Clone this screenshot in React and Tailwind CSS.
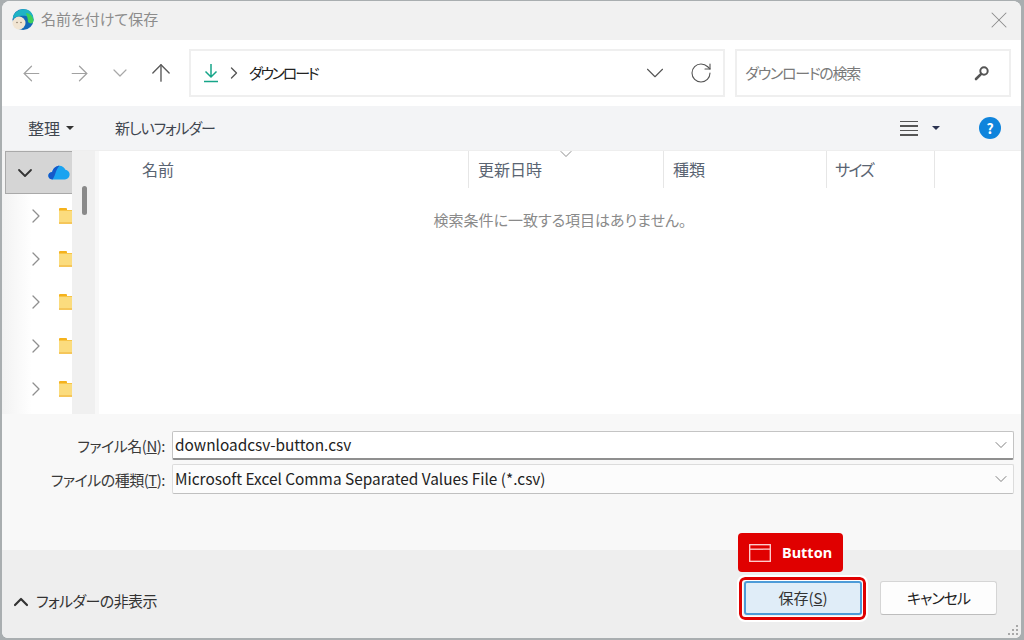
import React from "react";
import { ArrowLeft, ArrowRight, ArrowUp, ChevronDown, ChevronRight, ChevronUp, RotateCw, X } from "lucide-react";

const font = "font-['Noto_Sans_CJK_JP','Liberation_Sans',sans-serif] [font-feature-settings:'palt']";

const EdgeLogo = () => (
  <svg width="24" height="24" viewBox="0 0 24 24" className="mr-[6px]">
    <circle cx="12" cy="11.500" r="10.500" fill="#1268b8" />
    <path d="M2 9 C4 2 12 0 17 2 C21 4 23 8 22.500 13 C20 9 14 7 9 8 C6 8.500 3.500 9 2 11 Z" fill="#1fb3c4" />
    <path d="M15 5 C19 5 22.500 9 22.500 13 C22 16 19 16 17 14 C17 11 16 8 15 5 Z" fill="#3fd05a" />
    <circle cx="8" cy="15" r="6.500" fill="#f1e5d3" />
    <circle cx="6" cy="14.500" r="0.800" fill="#8a7a68" />
    <circle cx="10" cy="14.500" r="0.800" fill="#8a7a68" />
  </svg>
);

const DownloadIcon = () => (
  <svg width="16" height="20" viewBox="0 0 16 20" fill="none" stroke="#16a589" strokeWidth="1.500">
    <path d="M8 1 V14 M2.500 8.500 L8 14 L13.500 8.500 M1 18.500 H15" />
  </svg>
);

const SearchIcon = () => (
  <svg width="16" height="16" viewBox="0 0 16 16" fill="none" stroke="#555" strokeWidth="2">
    <circle cx="10" cy="6" r="3.700" />
    <path d="M7.200 8.800 L2 14" strokeWidth="2.600" strokeLinecap="round" />
  </svg>
);

const Caret = ({ className = "" }) => (
  <span className={`w-0 h-0 border-x-[4px] border-x-transparent border-t-[4px] ${className}`} />
);

const CloudIcon = () => (
  <svg width="22" height="15" viewBox="0 0 24 16">
    <path d="M5 15.500 C1.500 15.500 0 13 0.500 10.500 C1 8.500 3 7.500 4.500 7.500 C5.500 3 9 0.500 12.500 0.500 C15.500 0.500 18 2.500 19 5 C22 5.500 24 8 23.500 11 C23 14 21 15.500 18.500 15.500 Z" fill="#1aa3f0" />
    <path d="M5 15.500 C1.500 15.500 0 13 0.500 10.500 C1 8.500 3 7.500 4.500 7.500 C5.500 3 9 0.500 12.500 0.500 C10 3 9 6 8 9 C7 12 6 14 5 15.500 Z" fill="#1558c9" />
  </svg>
);

const FolderIcon = () => (
  <div className="relative w-[13px] h-[16px] shrink-0 overflow-hidden">
    <div className="absolute left-0 top-0 w-[8px] h-[5px] rounded-t-[1px] bg-[#f5b21c]" />
    <div className="absolute left-0 top-[2px] w-[16px] h-[14px] bg-[#fbdc7e] border-t border-[#f7c548] border-b-[2px] border-b-[#f5c65a]" />
  </div>
);

const TreeRow = () => (
  <div className="h-[43.400px] flex items-center pl-[22px] gap-[11px]">
    <ChevronRight size={24} strokeWidth={1.300} className="text-[#8f8f8f] shrink-0" />
    <FolderIcon />
  </div>
);

const columns = [
  { label: "更新日時", width: "w-[195px]", text: "pl-[9px]" },
  { label: "種類", width: "w-[163px]", text: "pl-[9px]" },
  { label: "サイズ", width: "w-[108px]", text: "pl-[8px] tracking-[-1.800px]" },
];

const Field = ({ label, letter, rest, value, active }) => (
  <div className="flex items-center">
    <div className="w-[163px] text-right text-[15px] leading-none tracking-[-0.500px] text-[#3a3a3a] whitespace-nowrap">
      {label}(<span className="underline">{letter}</span>){rest}
    </div>
    <div
      className={`ml-[7px] w-[842px] flex items-center justify-between pl-[2px] pr-[2px] border rounded-[2px] ${
        active
          ? "h-[29px] bg-white border-[#c4c4c4] border-b-[#8f8f8f] border-b-2"
          : "h-[30px] bg-[#fcfcfc] border-[#dcdcdc] border-b-[#c0c0c0]"
      }`}
    >
      <span className="text-[15.400px] text-[#222] whitespace-nowrap">{value}</span>
      <ChevronDown size={20} strokeWidth={1} className="text-[#666]" />
    </div>
  </div>
);

export default function App() {
  return (
    <div className={`${font} w-[1024px] h-[640px] overflow-hidden relative pl-[2px] pr-[3px] pt-[1px] pb-[2px] bg-[#a9aeb0]`}>
      <div className="h-full flex flex-col rounded-t-[8px] rounded-b-[6px] overflow-hidden bg-white">
        {/* title bar */}
        <div className="h-[39px] shrink-0 bg-[#f1f1f1] flex items-center pl-[9px] pr-[8px] pb-[2px]">
          <EdgeLogo />
          <span className="text-[15px] text-[#8c8c8c]">名前を付けて保存</span>
          <X size={28} strokeWidth={0.900} className="ml-auto text-[#8c8c8c]" />
        </div>

        {/* nav bar */}
        <div className="h-[66px] shrink-0 bg-white flex items-center pl-[17px] pr-[10px]">
          <ArrowLeft size={25} strokeWidth={1.200} className="text-[#a2a2a2]" />
          <ArrowRight size={25} strokeWidth={1.200} className="text-[#a2a2a2] ml-[23px]" />
          <ChevronDown size={24} strokeWidth={1.200} className="text-[#a8a8a8] ml-[16px]" />
          <ArrowUp size={28} strokeWidth={1.200} className="text-[#5c5c5c] ml-[15px]" />
          <div className="ml-[14px] w-[537px] h-[48px] border-2 border-[#efefef] flex items-center pl-[12px] pr-[10px]">
            <DownloadIcon />
            <ChevronRight size={20} strokeWidth={1.600} className="text-[#555] ml-[5px]" />
            <span className="ml-[5px] text-[15px] tracking-[-2.200px] text-[#222]">ダウンロード</span>
            <ChevronDown size={30} strokeWidth={0.900} className="ml-auto text-[#555]" />
            <RotateCw size={24} strokeWidth={1.100} className="ml-[19px] text-[#555]" />
          </div>
          <div className="ml-[10px] w-[276px] h-[48px] border-2 border-[#efefef] flex items-center pl-[8px] pr-[19px]">
            <span className="text-[15px] tracking-[-1.300px] text-[#7a7a7a]">ダウンロードの検索</span>
            <span className="ml-auto"><SearchIcon /></span>
          </div>
        </div>

        {/* toolbar */}
        <div className="h-[44px] shrink-0 bg-[#f3f4f6] flex items-center pl-[26px] pr-[20px] text-[15px] text-[#3f4650]">
          <span className="text-[16px]">整理</span>
          <Caret className="ml-[6px] border-t-[#333]" />
          <span className="ml-[41px] tracking-[-1.100px]">新しいフォルダー</span>
          <div className="ml-auto w-[18px] flex flex-col gap-[3px]">
            <div className="h-[1.500px] bg-[#555]" />
            <div className="h-[1.500px] bg-[#555]" />
            <div className="h-[1.500px] bg-[#555]" />
            <div className="h-[1.500px] bg-[#555]" />
          </div>
          <Caret className="ml-[14px] border-t-[#2a3350]" />
          <div className="ml-[39px] w-[22px] h-[22px] rounded-full bg-[#0f84dc] text-white text-[14px] font-bold flex items-center justify-center">?</div>
        </div>

        {/* main */}
        <div className="h-[264px] shrink-0 flex bg-white border-t border-[#eeeeee]">
          <div className="w-[70px] shrink-0 overflow-hidden bg-[linear-gradient(90deg,#f2f2f2,#ffffff_30px)]">
            <div className="ml-[3px] h-[43px] bg-[#d5d5d5] border border-[#a9a9a9] border-r-0 flex items-center pl-[7px]">
              <ChevronDown size={24} strokeWidth={1.800} className="text-[#333] shrink-0" />
              <span className="ml-[11px]"><CloudIcon /></span>
            </div>
            <TreeRow />
            <TreeRow />
            <TreeRow />
            <TreeRow />
            <TreeRow />
          </div>
          <div className="w-[23px] shrink-0 bg-[#f0f0f0] pl-[10px] pt-[35px]">
            <div className="w-[5px] h-[29px] rounded-full bg-[#8a8a8a]" />
          </div>
          <div className="w-[4px] shrink-0 bg-[#f8f8f8]" />
          <div className="flex-1 min-w-0 flex flex-col">
            <div className="h-[37px] flex items-center text-[16px] text-[#5a6472]">
              <div className="w-[370px] h-full pl-[43px] pb-[2px] flex items-center border-r border-[#e6e6e6]">名前</div>
              {columns.map((col) => (
                <div key={col.label} className={`${col.width} ${col.text} relative h-full pb-[2px] flex items-center border-r border-[#e6e6e6]`}>
                  {col.label}
                  {col.label === "更新日時" && (
                    <ChevronDown size={20} strokeWidth={1} className="absolute left-[87px] -top-[7px] text-[#777]" />
                  )}
                </div>
              ))}
            </div>
            <div className="pt-[21px] text-center text-[15px] leading-[22px] text-[#8a8a8a]">
              検索条件に一致する項目はありません。
            </div>
          </div>
        </div>

        {/* form */}
        <div className="h-[136px] shrink-0 bg-[#f8f8f8] pt-[17px] flex flex-col gap-[4px]">
          <Field label="ファイル名" letter="N" rest=":" value="downloadcsv-button.csv" active />
          <Field label="ファイルの種類" letter="T" rest=":" value="Microsoft Excel Comma Separated Values File (*.csv)" />
        </div>

        {/* footer */}
        <div className="flex-1 bg-[#eeeeee] relative flex items-center pl-[7px] pr-[24px] pt-[15px]">
          <ChevronUp size={24} strokeWidth={2.200} className="text-[#333]" />
          <span className="ml-[3px] text-[15px] tracking-[-0.600px] text-[#333]">フォルダーの非表示</span>
          <div className="ml-auto -mt-[7px] w-[118px] h-[34px] rounded-[3px] bg-[#e0edf8] border-2 border-[#4d9bd8] flex items-center justify-center text-[15px] text-[#333]">
            保存(<span className="underline">S</span>)
          </div>
          <div className="ml-[18px] -mt-[7px] w-[117px] h-[34px] rounded-[3px] bg-[#fdfdfd] border border-[#d5d5d5] border-b-[#bdbdbd] flex items-center justify-center text-[15px] tracking-[-1px] text-[#222]">
            キャンセル
          </div>
          {/* red annotation */}
          <div className="absolute left-[736px] -top-[17px] w-[105px] h-[39px] rounded-[4px] bg-[#e00000] flex items-center pl-[11px] text-white">
            <svg width="22" height="18" viewBox="0 0 22 18" fill="none" stroke="#ffd6d6" strokeWidth="1.300">
              <rect x="0.700" y="0.700" width="20.600" height="16.600" />
              <path d="M0.700 5.200 H21.300" />
            </svg>
            <span className="ml-[11px] text-[14.500px] font-bold font-['Noto_Sans','Liberation_Sans',sans-serif]">Button</span>
          </div>
          <div className="absolute left-[737px] top-[27px] w-[127px] h-[43px] rounded-[6px] border-[3px] border-[#e00000] outline-2 outline-white shadow-[inset_0_0_0_1px_white]" />
          <svg width="12" height="12" viewBox="0 0 12 12" fill="#a8a8a8" className="absolute right-[1px] bottom-[1px]">
            <rect x="8" y="0" width="2" height="2" />
            <rect x="4" y="4" width="2" height="2" />
            <rect x="8" y="4" width="2" height="2" />
            <rect x="0" y="8" width="2" height="2" />
            <rect x="4" y="8" width="2" height="2" />
            <rect x="8" y="8" width="2" height="2" />
          </svg>
        </div>
      </div>
    </div>
  );
}
